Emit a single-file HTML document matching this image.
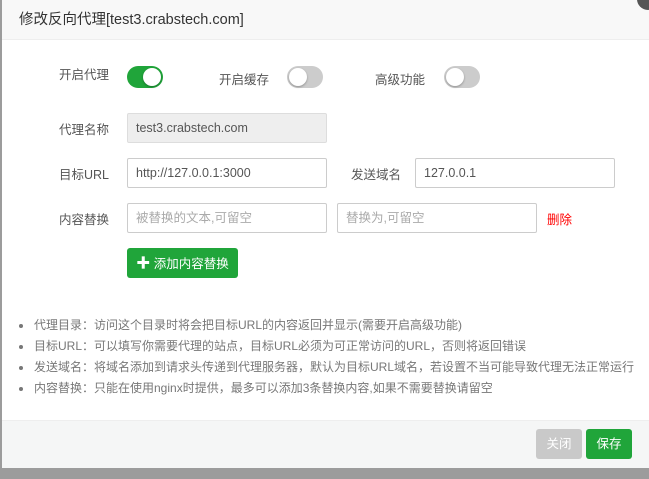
<!DOCTYPE html>
<html><head><meta charset="utf-8"><style>
*{margin:0;padding:0;box-sizing:border-box}
body{width:649px;height:479px;background:#9c9c9c;position:relative;overflow:hidden;font-family:"Liberation Sans","Noto Sans CJK SC",sans-serif;font-size:12px;color:#555}
.dlg{position:absolute;left:2px;top:0;width:647px;height:468px;background:#fff}
.hd{position:absolute;left:0;top:0;right:0;height:40px;background:#f8f8f8;border-bottom:1px solid #eee;font-size:14.5px;color:#333;line-height:40px;padding-left:17px}
.close{position:absolute;left:637px;top:-12px;width:22px;height:22px;border-radius:50%;background:#555}
.lbl{position:absolute;font-size:12.5px;color:#555}
.sw{position:absolute;width:36px;height:22px;border-radius:11px;background:#ccc}
.sw::after{content:"";position:absolute;top:2px;left:2px;width:18px;height:18px;border-radius:50%;background:#fff;box-shadow:0 1px 2px rgba(0,0,0,.3)}
.sw.on{background:#20a53a}
.sw.on::after{left:16px}
.in{position:absolute;height:30px;border:1px solid #ccc;border-radius:2px;background:#fff;font-size:12.5px;color:#555;line-height:28px;padding-left:8px}
.ph{color:#aaa}
.btn{position:absolute;height:30px;border-radius:3px;color:#fff;font-size:12.5px;line-height:30px;text-align:center}
ul{position:absolute;left:16px;top:315px;list-style:none}
li{font-size:12px;color:#777;line-height:21px;position:relative;padding-left:16px}
li::before{content:"";position:absolute;left:1px;top:9px;width:4px;height:4px;border-radius:50%;background:#777}
.ft{position:absolute;left:0;right:0;top:420px;height:48px;background:#f5f6f6;border-top:1px solid #eee}
</style></head><body>
<div class="dlg">
<div class="hd">修改反向代理[test3.crabstech.com]</div>
<div class="lbl" style="left:57px;top:64px">开启代理</div>
<div class="sw on" style="left:125px;top:66px"></div>
<div class="lbl" style="left:217px;top:69px">开启缓存</div>
<div class="sw" style="left:285px;top:66px"></div>
<div class="lbl" style="left:373px;top:69px">高级功能</div>
<div class="sw" style="left:442px;top:66px"></div>

<div class="lbl" style="left:57px;top:119px">代理名称</div>
<div class="in" style="left:125px;top:113px;width:200px;background:#eee;border-color:#ddd">test3.crabstech.com</div>
<div class="lbl" style="left:57px;top:164px">目标URL</div>
<div class="in" style="left:125px;top:158px;width:200px">http://127.0.0.1:3000</div>
<div class="lbl" style="left:349px;top:164px">发送域名</div>
<div class="in" style="left:413px;top:158px;width:200px">127.0.0.1</div>
<div class="lbl" style="left:57px;top:209px">内容替换</div>
<div class="in ph" style="left:125px;top:203px;width:200px">被替换的文本,可留空</div>
<div class="in ph" style="left:335px;top:203px;width:200px">替换为,可留空</div>
<div class="lbl" style="left:545px;top:209px;color:#f00">删除</div>
<div class="btn" style="left:125px;top:248px;width:111px;background:#20a53a"><b style="font-size:14px">✚</b> 添加内容替换</div>

<ul>
<li>代理目录：访问这个目录时将会把目标URL的内容返回并显示(需要开启高级功能)</li>
<li>目标URL：可以填写你需要代理的站点，目标URL必须为可正常访问的URL，否则将返回错误</li>
<li>发送域名：将域名添加到请求头传递到代理服务器，默认为目标URL域名，若设置不当可能导致代理无法正常运行</li>
<li>内容替换：只能在使用nginx时提供，最多可以添加3条替换内容,如果不需要替换请留空</li>
</ul>
<div class="ft"></div>
<div class="btn" style="left:534px;top:429px;width:46px;background:#c9c9c9">关闭</div>
<div class="btn" style="left:584px;top:429px;width:46px;background:#20a53a">保存</div>
</div>
<div class="close"></div>
</body></html>
